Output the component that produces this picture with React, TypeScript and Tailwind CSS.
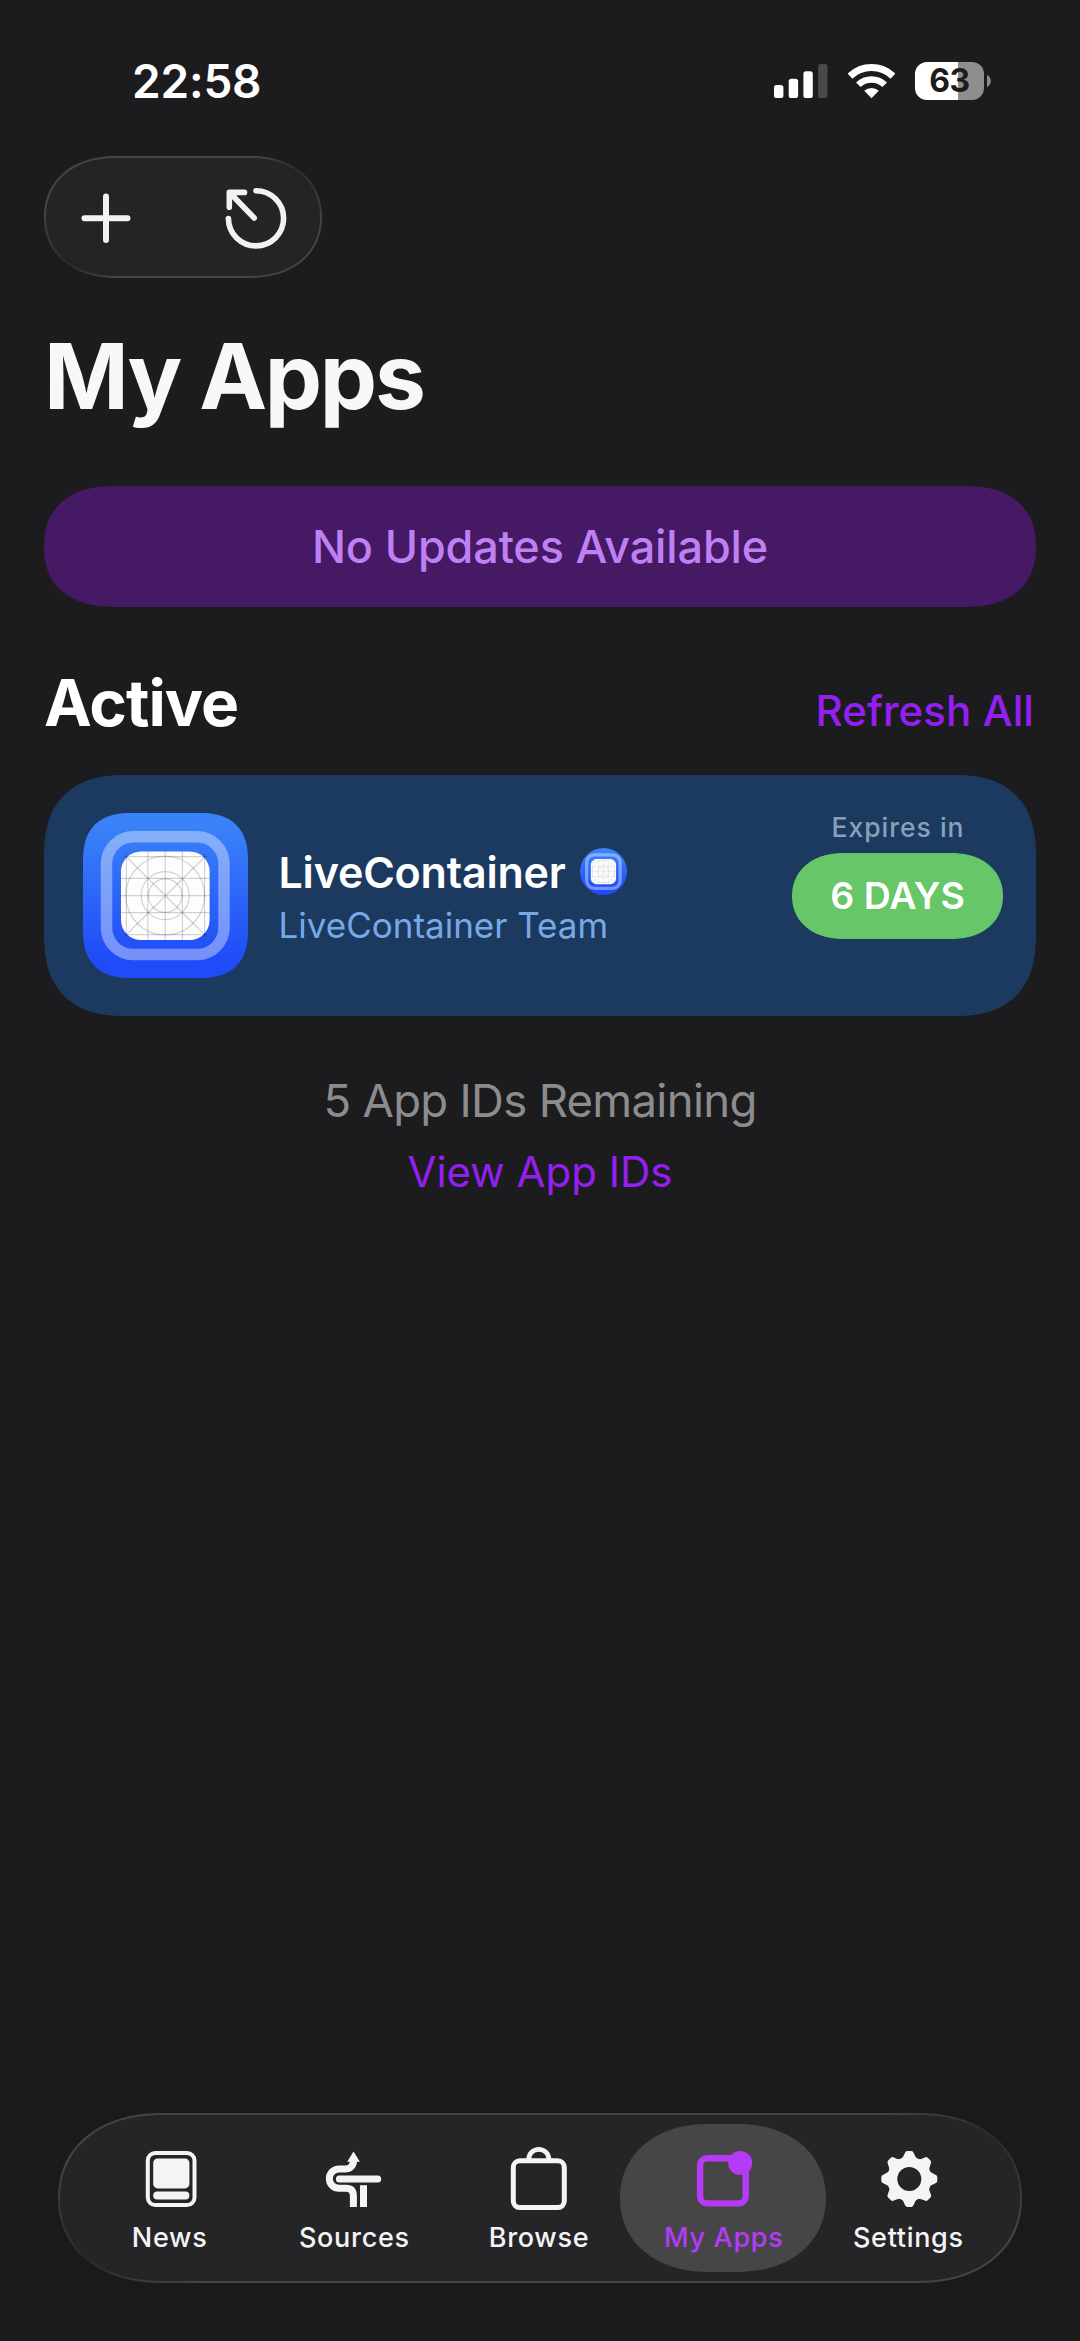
/**
 * My Apps screen — installed apps, refresh state and the floating tab bar
 */

import { useId, type ReactNode } from 'react'
import clsx from 'clsx'

const GEAR_ANGLES = [0, 45, 90, 135, 180, 225, 270, 315]

function StatusBar() {
  return (
    <div className="flex h-[121px] shrink-0 items-center justify-between pt-[40px] pr-[89px] pl-[132px]">
      <span className="text-[46px] leading-[46px] font-semibold tracking-[-0.2px] text-white">22:58</span>
      <div className="flex items-center">
        <svg width="54" height="34" viewBox="0 0 54 34" fill="#fff">
          <rect x="0" y="21" width="9.4" height="13" rx="2.6" />
          <rect x="14.7" y="14.7" width="9.4" height="19.3" rx="2.6" />
          <rect x="29.4" y="7.3" width="9.4" height="26.7" rx="2.6" />
          <rect x="44.1" y="0" width="9.4" height="34" rx="2.6" fill="#4a4a4a" />
        </svg>
        <svg className="ml-[20px]" width="47" height="36" viewBox="0 0 47 36" fill="none" stroke="#fff">
          <path d="M2 13.2A31 31 0 0 1 45 13.2" strokeWidth="7" />
          <path d="M10.3 21.8A19 19 0 0 1 36.7 21.8" strokeWidth="6.4" />
          <path d="M23.5 35.2L16.2 27.8A11 11 0 0 1 30.8 27.8Z" fill="#fff" stroke="none" />
        </svg>
        <div className="ml-[20px] flex h-[38px] w-[69px] items-center justify-center rounded-[12px] bg-[linear-gradient(90deg,#fff_63%,#8e8e8e_63%)]">
          <span className="text-[32px] leading-[38px] font-bold tracking-[-0.5px] text-[#1c1c1c]">63</span>
        </div>
        <svg className="ml-[3px]" width="4" height="12" viewBox="0 0 4 12">
          <path d="M0 0C5 2 5 10 0 12Z" fill="#8e8e8e" />
        </svg>
      </div>
    </div>
  )
}

function Toolbar() {
  return (
    <div className="mt-[35px] ml-[44px] h-[122px] w-[278px] shrink-0 rounded-[72px/61px] bg-[conic-gradient(#444446_52deg,#2c2c2e_68deg,#444446_92deg,#444446_232deg,#2c2c2e_248deg,#444446_272deg)] p-[2px] [corner-shape:superellipse(1.12)]">
      <div className="flex h-full items-center justify-between rounded-[70px/59px] bg-[#242426] pt-[1px] pr-[31px] pl-[33px] [corner-shape:superellipse(1.12)]">
        <svg width="54" height="54" viewBox="0 0 54 54" stroke="#f2f2f4" strokeWidth="6" strokeLinecap="round">
          <path d="M27 5.5V49M5.5 27.3H48.5" />
        </svg>
        <svg width="66" height="66" viewBox="0 0 66 66" fill="none" stroke="#f2f2f4" strokeWidth="5.6" strokeLinecap="round" strokeLinejoin="round">
          <path d="M33 5.7A27.6 27.6 0 1 1 5.4 33.6" />
          <path d="M21.5 7.4H6.3V22.3M7 8L31.2 33" />
        </svg>
      </div>
    </div>
  )
}

/** Blue rounded app icon with the icon-grid template in the middle */
function AppArtwork({ size }: { size: number }) {
  const id = useId()
  return (
    <svg width={size} height={size} viewBox="0 0 165 165" fill="none">
      <defs>
        <linearGradient id={id} x1="0" y1="0" x2="0" y2="1">
          <stop offset="0.08" stopColor="#3a82f7" />
          <stop offset="0.9" stopColor="#1f4bf8" />
        </linearGradient>
      </defs>
      <rect width="165" height="165" fill={`url(#${id})`} />
      <rect x="23.5" y="23.8" width="117.5" height="117.8" rx="27" stroke="#fff" strokeOpacity="0.38" strokeWidth="11.5" />
      <rect x="38" y="38.5" width="88.6" height="88.6" rx="20" fill="#fdfdfd" />
      <g stroke="#000" strokeOpacity="0.17" strokeWidth="1.2">
        <path d="M43.4 41V124M64.8 38.5V127M82.2 38.5V127M99.4 38.5V127M121.6 41V124" />
        <path d="M41 43.7H124M38 65.3H126.6M38 82.6H126.6M38 99.6H126.6M41 121.6H124" />
        <path d="M43 43.5L122 122M122 43.5L43 122" />
        <circle cx="82.2" cy="82.6" r="39.4" />
        <circle cx="82.2" cy="82.6" r="24" />
        <circle cx="82.2" cy="82.6" r="16.8" />
      </g>
    </svg>
  )
}

function AppCard() {
  return (
    <div className="mx-[44px] mt-[40px] flex h-[241px] shrink-0 rounded-[82px] bg-[#1c3960] pr-[33px] pl-[38.5px] [corner-shape:superellipse(1.3)]">
      <div className="mt-[38px] h-[165px] w-[165px] overflow-hidden rounded-[48px] [corner-shape:superellipse(1.3)]">
        <AppArtwork size={165} />
      </div>
      <div className="ml-[31px] flex-1 pt-[72px]">
        <div className="flex h-[50px] items-center">
          <span className="text-[43px] leading-[50px] font-semibold tracking-[-0.2px] text-white">LiveContainer</span>
          <div className="mb-[2px] ml-[14px] h-[47px] w-[47px] overflow-hidden rounded-full">
            <AppArtwork size={47} />
          </div>
        </div>
        <p className="mt-[8px] text-[35px] leading-[40px] text-[#78a9e6]">LiveContainer Team</p>
      </div>
      <div className="flex w-[211px] flex-col items-center pt-[36px]">
        <span className="ml-[1px] text-[26.5px] leading-[32px] font-medium tracking-[1px] text-[#8aa0ba]">Expires in</span>
        <span className="mt-[10px] flex h-[86px] w-[211px] items-center justify-center rounded-[52px/43px] bg-[#67c668] text-[37.5px] font-semibold text-white [corner-shape:superellipse(1.12)]">
          6 DAYS
        </span>
      </div>
    </div>
  )
}

function NewsIcon() {
  return (
    <svg width="72" height="72" viewBox="0 0 72 72" fill="currentColor">
      <rect x="13.8" y="10" width="46.7" height="52" rx="7.5" fill="none" stroke="currentColor" strokeWidth="4" />
      <rect x="19.2" y="15.4" width="36.2" height="30" rx="4.5" />
      <rect x="19.2" y="48.6" width="36.2" height="7.8" rx="3.9" />
    </svg>
  )
}

function SourcesIcon() {
  return (
    <svg width="72" height="72" viewBox="0 0 72 72" fill="none" stroke="currentColor" strokeWidth="7">
      <path d="M21.4 35.9H59.7" strokeLinecap="round" />
      <path d="M45.5 42.2V64" />
      <path d="M35.4 64V53C35.4 47 32 45.3 28 45.3H21A9.65 9.65 0 0 1 21 26H27C32.5 26 35.6 22.5 35.6 17" />
      <path d="M35.5 8.6L41.9 18.8H29.2Z" fill="currentColor" stroke="none" />
    </svg>
  )
}

function BrowseIcon() {
  return (
    <svg width="72" height="72" viewBox="0 0 72 72" fill="none" stroke="currentColor" strokeWidth="5">
      <rect x="10.3" y="17.8" width="51" height="46.8" rx="6.5" />
      <path d="M25.8 17V16A10 9.7 0 0 1 45.8 16V17" strokeWidth="4.8" />
    </svg>
  )
}

function MyAppsIcon() {
  return (
    <svg width="72" height="72" viewBox="0 0 72 72">
      <rect x="12.1" y="15.2" width="45.6" height="45.2" rx="7" fill="none" stroke="currentColor" strokeWidth="6.4" />
      <circle cx="52.2" cy="20" r="12" fill="currentColor" />
    </svg>
  )
}

function SettingsIcon() {
  return (
    <svg width="72" height="72" viewBox="0 0 72 72" fill="currentColor">
      <g transform="translate(37.3 36)">
        <circle r="17" fill="none" stroke="currentColor" strokeWidth="10" />
        {GEAR_ANGLES.map((angle) => (
          <path
            key={angle}
            transform={`rotate(${angle})`}
            d="M-9.5 -19Q-6 -21 -4.6 -25.6Q-3.8 -28 -2 -28H2Q3.8 -28 4.6 -25.6Q6 -21 9.5 -19Z"
          />
        ))}
      </g>
    </svg>
  )
}

interface TabItemProps {
  label: string
  icon: ReactNode
  active?: boolean
}

function TabItem({ label, icon, active }: TabItemProps) {
  return (
    <button
      className={clsx(
        'relative flex w-[184.7px] flex-col items-center pt-[28px]',
        active ? 'text-[#b53bf6]' : 'text-[#f4f4f6]',
      )}
    >
      {active && (
        <span className="absolute top-[9px] -left-[11px] h-[148px] w-[206px] rounded-[88px/74px] bg-[#464648] [corner-shape:superellipse(1.1)]" />
      )}
      <span className="relative">{icon}</span>
      <span className="relative mt-[6px] text-[27px] leading-[33px] font-medium tracking-[0.7px] whitespace-nowrap">{label}</span>
    </button>
  )
}

function TabBar() {
  return (
    <nav className="mx-[58px] mt-auto mb-[58px] h-[170px] shrink-0 rounded-[104px/85px] bg-[conic-gradient(#444446_76deg,#2a2a2c_82deg,#444446_94deg,#444446_256deg,#2a2a2c_262deg,#444446_274deg)] p-[2px] shadow-[0_4px_48px_rgba(0,0,0,0.12)] [corner-shape:superellipse(1.12)]">
      <div className="flex h-full justify-center rounded-[102px/83px] bg-[#252527] pr-[2px] [corner-shape:superellipse(1.12)]">
        <TabItem label="News" icon={<NewsIcon />} />
        <TabItem label="Sources" icon={<SourcesIcon />} />
        <TabItem label="Browse" icon={<BrowseIcon />} />
        <TabItem label="My Apps" icon={<MyAppsIcon />} active />
        <TabItem label="Settings" icon={<SettingsIcon />} />
      </div>
    </nav>
  )
}

export default function App() {
  return (
    <div className="flex h-[2341px] w-[1080px] flex-col overflow-hidden bg-[#1c1c1e] font-['Inter',sans-serif] [&_svg]:block">
      <StatusBar />
      <Toolbar />

      <h1 className="mt-[52px] ml-[44px] shrink-0 text-[91px] leading-[92px] font-bold tracking-[-2.3px] text-[#f8f8f8]">My Apps</h1>

      <div className="mx-[44px] mt-[64px] flex h-[121px] shrink-0 items-center justify-center rounded-[70px/60px] bg-[#451963] text-[45px] font-medium tracking-[-0.15px] text-[#bf80f3] [corner-shape:superellipse(1.2)]">
        No Updates Available
      </div>

      <div className="mx-[44px] mt-[64px] flex h-[64px] shrink-0 items-baseline justify-between">
        <h2 className="text-[64px] leading-[64px] font-bold tracking-[-1px] text-white">Active</h2>
        <button className="pr-[2px] text-[42px] leading-[42px] font-medium tracking-[0.1px] text-[#931ff0]">Refresh All</button>
      </div>

      <AppCard />

      <div className="mt-[56px] flex flex-col items-center">
        <p className="text-[45.5px] leading-[57px] tracking-[-0.7px] text-[#8c8c8d]">5 App IDs Remaining</p>
        <button className="mt-[15px] text-[42px] leading-[56px] text-[#931ff0]">View App IDs</button>
      </div>

      <TabBar />
    </div>
  )
}
